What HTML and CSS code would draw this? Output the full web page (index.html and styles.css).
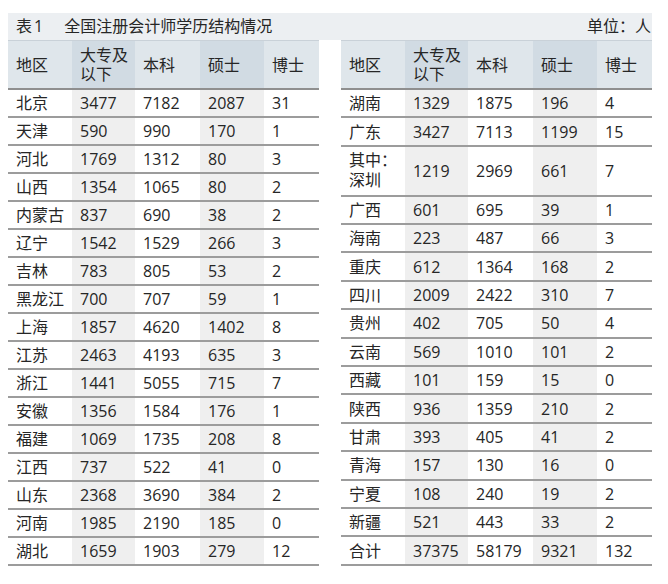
FILE: index.html
```html
<!DOCTYPE html>
<html lang="zh-CN">
<head>
<meta charset="utf-8">
<title>表1 全国注册会计师学历结构情况</title>
<link rel="stylesheet" href="styles.css">
</head>
<body>
<div class="page">
  <div class="titlebar">
    <div class="title"><span class="tno">表1</span><span>全国注册会计师学历结构情况</span></div>
    <div class="unit">单位：人</div>
  </div>
  <div class="tables">
    <table class="data">
      <colgroup><col class="c1"><col class="c2"><col class="c3"><col class="c4"><col class="c5"></colgroup>
      <thead>
        <tr><th>地区</th><th class="dk">大专及<br>以下</th><th>本科</th><th class="dk">硕士</th><th>博士</th></tr>
      </thead>
      <tbody>
        <tr><td>北京</td><td class="sh">3477</td><td>7182</td><td class="sh">2087</td><td>31</td></tr>
        <tr><td>天津</td><td class="sh">590</td><td>990</td><td class="sh">170</td><td>1</td></tr>
        <tr><td>河北</td><td class="sh">1769</td><td>1312</td><td class="sh">80</td><td>3</td></tr>
        <tr><td>山西</td><td class="sh">1354</td><td>1065</td><td class="sh">80</td><td>2</td></tr>
        <tr><td>内蒙古</td><td class="sh">837</td><td>690</td><td class="sh">38</td><td>2</td></tr>
        <tr><td>辽宁</td><td class="sh">1542</td><td>1529</td><td class="sh">266</td><td>3</td></tr>
        <tr><td>吉林</td><td class="sh">783</td><td>805</td><td class="sh">53</td><td>2</td></tr>
        <tr><td>黑龙江</td><td class="sh">700</td><td>707</td><td class="sh">59</td><td>1</td></tr>
        <tr><td>上海</td><td class="sh">1857</td><td>4620</td><td class="sh">1402</td><td>8</td></tr>
        <tr><td>江苏</td><td class="sh">2463</td><td>4193</td><td class="sh">635</td><td>3</td></tr>
        <tr><td>浙江</td><td class="sh">1441</td><td>5055</td><td class="sh">715</td><td>7</td></tr>
        <tr><td>安徽</td><td class="sh">1356</td><td>1584</td><td class="sh">176</td><td>1</td></tr>
        <tr><td>福建</td><td class="sh">1069</td><td>1735</td><td class="sh">208</td><td>8</td></tr>
        <tr><td>江西</td><td class="sh">737</td><td>522</td><td class="sh">41</td><td>0</td></tr>
        <tr><td>山东</td><td class="sh">2368</td><td>3690</td><td class="sh">384</td><td>2</td></tr>
        <tr><td>河南</td><td class="sh">1985</td><td>2190</td><td class="sh">185</td><td>0</td></tr>
        <tr><td>湖北</td><td class="sh">1659</td><td>1903</td><td class="sh">279</td><td>12</td></tr>
      </tbody>
    </table>
    <table class="data">
      <colgroup><col class="c1"><col class="c2"><col class="c3"><col class="c4"><col class="c5"></colgroup>
      <thead>
        <tr><th>地区</th><th class="dk">大专及<br>以下</th><th>本科</th><th class="dk">硕士</th><th>博士</th></tr>
      </thead>
      <tbody>
        <tr><td>湖南</td><td class="sh">1329</td><td>1875</td><td class="sh">196</td><td>4</td></tr>
        <tr><td>广东</td><td class="sh">3427</td><td>7113</td><td class="sh">1199</td><td>15</td></tr>
        <tr class="tall"><td class="two">其中：<br>深圳</td><td class="sh">1219</td><td>2969</td><td class="sh">661</td><td>7</td></tr>
        <tr><td>广西</td><td class="sh">601</td><td>695</td><td class="sh">39</td><td>1</td></tr>
        <tr><td>海南</td><td class="sh">223</td><td>487</td><td class="sh">66</td><td>3</td></tr>
        <tr><td>重庆</td><td class="sh">612</td><td>1364</td><td class="sh">168</td><td>2</td></tr>
        <tr><td>四川</td><td class="sh">2009</td><td>2422</td><td class="sh">310</td><td>7</td></tr>
        <tr><td>贵州</td><td class="sh">402</td><td>705</td><td class="sh">50</td><td>4</td></tr>
        <tr><td>云南</td><td class="sh">569</td><td>1010</td><td class="sh">101</td><td>2</td></tr>
        <tr><td>西藏</td><td class="sh">101</td><td>159</td><td class="sh">15</td><td>0</td></tr>
        <tr><td>陕西</td><td class="sh">936</td><td>1359</td><td class="sh">210</td><td>2</td></tr>
        <tr><td>甘肃</td><td class="sh">393</td><td>405</td><td class="sh">41</td><td>2</td></tr>
        <tr><td>青海</td><td class="sh">157</td><td>130</td><td class="sh">16</td><td>0</td></tr>
        <tr><td>宁夏</td><td class="sh">108</td><td>240</td><td class="sh">19</td><td>2</td></tr>
        <tr><td>新疆</td><td class="sh">521</td><td>443</td><td class="sh">33</td><td>2</td></tr>
        <tr><td>合计</td><td class="sh">37375</td><td>58179</td><td class="sh">9321</td><td>132</td></tr>
      </tbody>
    </table>
  </div>
</div>
</body>
</html>
```
FILE: styles.css
```css
* { box-sizing: border-box; }
html, body { margin: 0; padding: 0; background: #ffffff; }
body {
  font-family: "Open Sans", "Noto Sans CJK SC", sans-serif;
  font-size: 16px;
  color: #262626;
}
.page {
  width: 668px;
  padding: 13px 16px 0 8px;
}
.titlebar {
  display: flex;
  justify-content: space-between;
  align-items: center;
  height: 27px;
  background: #eceff2;
  padding: 0 1px 0 8px;
  line-height: 27px;
}
.title .tno { margin-right: 19px; letter-spacing: 2px; }
.tables {
  display: flex;
  justify-content: space-between;
}
.data {
  width: 311px;
  table-layout: fixed;
  border-collapse: separate;
  border-spacing: 0;
}
.c1 { width: 64px; }
.c2 { width: 63px; }
.c3 { width: 65px; }
.c4 { width: 64px; }
.c5 { width: 55px; }
.data th {
  font-family: "Liberation Sans", "Noto Sans CJK SC", sans-serif;
  font-weight: normal;
  text-align: left;
  vertical-align: middle;
  background: #dfe6eb;
  color: #262626;
  padding: 5px 4px 4px 8px;
  line-height: 19px;
  border-top: 1px solid #c9d1d8;
  border-bottom: 2px solid #8f8f8f;
}
.data th.dk { background: #d1dbe3; }
.data td {
  padding: 0 4px 0 8px;
  line-height: 26px;
  vertical-align: middle;
  border-bottom: 2px solid #9c9c9c;
  white-space: nowrap;
}
.data td.sh { background: #efefef; }
.data td.two {
  font-family: "Liberation Sans", "Noto Sans CJK SC", sans-serif;
  line-height: 20px;
  padding-top: 4px;
  padding-bottom: 3px;
}
```
